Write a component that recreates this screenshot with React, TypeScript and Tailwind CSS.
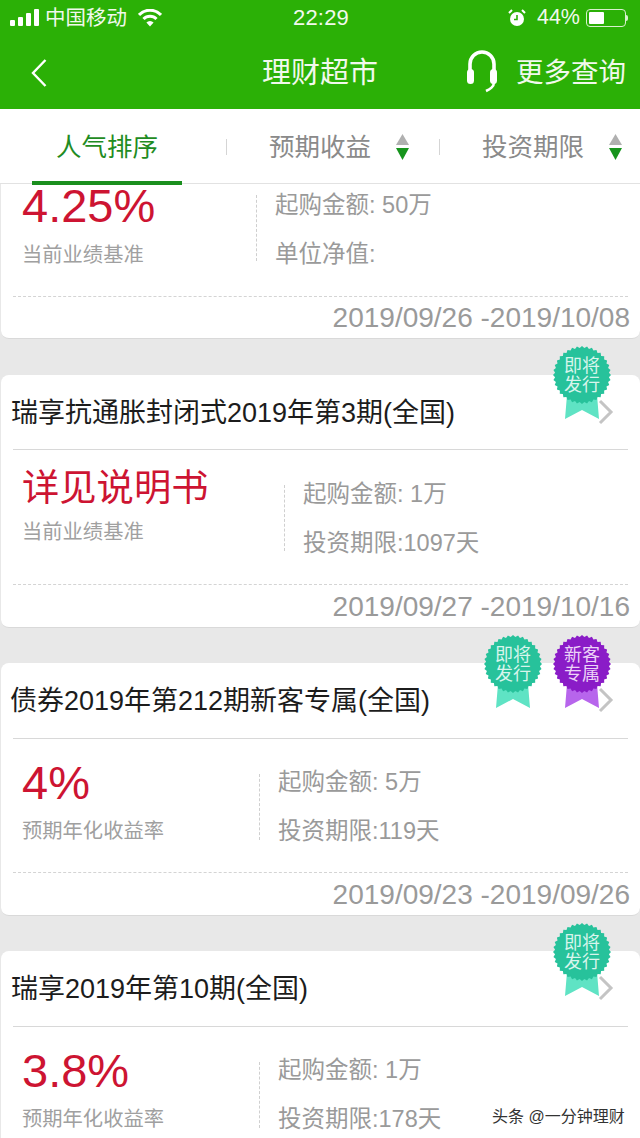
const FONT = "font-['Liberation_Sans','Noto_Sans_CJK_SC',sans-serif]";

function Badge({ fill, ribbon, text, a, b, className }: { fill: string; ribbon: string; text: string; a: string; b: string; className: string }) {
  const pts: string[] = [];
  const n = 36;
  for (let i = 0; i < n * 2; i++) {
    const r = i % 2 === 0 ? 29 : 27;
    const t = (Math.PI * i) / n;
    pts.push(`${(30 + r * Math.cos(t)).toFixed(2)},${(30 + r * Math.sin(t)).toFixed(2)}`);
  }
  return (
    <div className={`absolute w-[60px] h-[76px] ${className}`}>
      <svg width="60" height="76" viewBox="0 0 60 76" className="absolute left-0 top-0">
        <polygon points="15,50 45,50 47,74 30,65 13,74" fill={ribbon} />
        <polygon points={pts.join(" ")} fill={fill} />
      </svg>
      <div className={`absolute left-0 top-[12px] w-[60px] flex flex-col items-center text-[18px] leading-[19px] ${text}`}>
        <span>{a}</span>
        <span>{b}</span>
      </div>
    </div>
  );
}

function Chevron() {
  return (
    <svg width="16" height="26" viewBox="0 0 16 26" className="absolute right-[26px] top-[24px]">
      <path d="M2 2 L13 13 L2 24" fill="none" stroke="#c4c4c4" strokeWidth="3" />
    </svg>
  );
}

type CardProps = {
  title?: string;
  titleClass: string;
  value: string;
  valueClass: string;
  label: string;
  labelClass: string;
  leftWidth: string;
  lines: string[];
  dates: string;
  badges?: React.ReactNode;
  rootClass: string;
  bodyClass: string;
  infoClass: string;
  footerClass: string;
};

function Card({ title, titleClass, value, valueClass, label, labelClass, leftWidth, lines, dates, badges, rootClass, bodyClass, infoClass, footerClass }: CardProps) {
  return (
    <div className={`relative shrink-0 ml-px bg-white rounded-lg border-b border-[#d9d9d9] ${rootClass}`}>
      <div className={`pt-[2px] flex items-center text-[27px] text-[#1c1c1c] whitespace-nowrap ${titleClass}`}>{title}</div>
      <div className="h-px mx-3 bg-[#d8d8d8]" />
      <div className={`flex pl-[21px] ${bodyClass}`}>
        <div className={`flex flex-col shrink-0 ${leftWidth}`}>
          <div className={`h-[46px] leading-[46px] text-[#cd1432] whitespace-nowrap ${valueClass}`}>{value}</div>
          <div className={`h-6 leading-6 text-[20.3px] text-[#a0a0a0] whitespace-nowrap ${labelClass}`}>{label}</div>
        </div>
        <div className="w-px h-[66px] mt-[35px] border-l border-dashed border-[#cfcfcf]" />
        <div className={`ml-[18px] flex flex-col gap-[21px] text-[23.5px] leading-7 text-[#9a9a9a] whitespace-nowrap ${infoClass}`}>
          {lines.map((l) => (
            <div key={l}>{l}</div>
          ))}
        </div>
      </div>
      <div className="mx-3 border-t border-dashed border-[#d4d4d4]" />
      <div className={`pr-[10px] flex items-center justify-end text-[28px] text-[#9a9a9a] whitespace-nowrap ${footerClass}`}>{dates}</div>
      {badges}
      {title ? <Chevron /> : null}
    </div>
  );
}

function Sort() {
  return (
    <svg width="15" height="28" viewBox="0 0 15 28" className="shrink-0">
      <path d="M7.5 1 L14 12 L1 12 Z" fill="#b0b0b0" />
      <path d="M1 15 L14 15 L7.5 27 Z" fill="#16941c" />
    </svg>
  );
}

export default function App() {
  return (
    <div className={`relative w-[640px] h-[1138px] overflow-hidden flex flex-col bg-[#e8e8e8] ${FONT}`}>
      <header className="shrink-0 h-[109px] bg-[#2bb006] text-[#f1f9ec]">
        <div className="h-[36px] flex items-center pl-[10px] pr-[12px]">
          <svg width="30" height="18" viewBox="0 0 30 18" className="shrink-0">
            <rect x="0" y="11" width="5" height="6" rx="1" fill="#fff" />
            <rect x="8" y="8" width="5" height="9" rx="1" fill="#fff" />
            <rect x="16" y="4" width="5" height="13" rx="1" fill="#fff" />
            <rect x="24" y="0" width="5" height="17" rx="1" fill="#fff" />
          </svg>
          <span className="ml-[5px] text-[20.5px] leading-none whitespace-nowrap">中国移动</span>
          <svg width="24" height="18" viewBox="0 0 24 18" className="ml-[11px] shrink-0">
            <path d="M1 6 A15 15 0 0 1 23 6" fill="none" stroke="#fff" strokeWidth="3" />
            <path d="M5.5 10 A9 9 0 0 1 18.5 10" fill="none" stroke="#fff" strokeWidth="3" />
            <path d="M12 17.5 L8.4 13.5 A5 5 0 0 1 15.6 13.5 Z" fill="#fff" />
          </svg>
          <span className="ml-[131px] text-[22px] leading-none whitespace-nowrap tracking-[0.2px]">22:29</span>
          <span className="flex-1" />
          <svg width="18" height="18" viewBox="0 0 18 18" className="shrink-0">
            <circle cx="9" cy="10" r="7" fill="#fff" />
            <path d="M9 6 V10.5 H6" fill="none" stroke="#2bb006" strokeWidth="1.6" />
            <path d="M1 4 L4 1 M17 4 L14 1" stroke="#fff" strokeWidth="2" />
          </svg>
          <span className="ml-[11px] text-[21.5px] leading-none">44%</span>
          <div className="ml-[6px] w-[40px] h-[18px] border border-[#d9f0cf] rounded-[4px] p-[2px]">
            <div className="w-[15px] h-full bg-white rounded-[1px]" />
          </div>
          <div className="w-[2px] h-[6px] bg-[#d9f0cf] rounded-r-sm" />
        </div>
        <div className="h-[73px] flex items-center">
          <div className="w-[262px] pl-[30px] shrink-0">
            <svg width="18" height="30" viewBox="0 0 18 30">
              <path d="M15.5 2 L3 15 L15.5 28" fill="none" stroke="#fff" strokeWidth="2.4" />
            </svg>
          </div>
          <div className="w-[204px] shrink-0 text-[29px] leading-none whitespace-nowrap pt-[2px]">理财超市</div>
          <svg width="32" height="44" viewBox="0 0 32 44" className="shrink-0 -mt-1">
            <path d="M4 24 V15 A12 12 0 0 1 28 15 V24" fill="none" stroke="#fff" strokeWidth="3.6" />
            <rect x="1" y="20" width="7" height="15" rx="3.5" fill="#fff" />
            <rect x="24" y="20" width="7" height="15" rx="3.5" fill="#fff" />
            <path d="M28 33 C28 38 24 40 20 42" fill="none" stroke="#fff" strokeWidth="2.6" />
          </svg>
          <div className="ml-[18px] text-[27.5px] leading-none whitespace-nowrap">更多查询</div>
        </div>
      </header>

      <nav className="relative z-10 shrink-0 h-[75px] pt-[2px] bg-white flex items-center border-b border-[#e2e2e2]">
        <div className="w-[226px] pl-[56px] text-[25.5px] text-[#1f8c23] whitespace-nowrap">人气排序</div>
        <div className="w-px h-[16px] bg-[#d5d5d5]" />
        <div className="w-[212px] pl-[42px] flex items-center gap-[24px] text-[25.5px] text-[#8a8a8a] whitespace-nowrap">
          <span>预期收益</span>
          <Sort />
        </div>
        <div className="w-px h-[16px] bg-[#d5d5d5]" />
        <div className="pl-[42px] flex items-center gap-[24px] text-[25.5px] text-[#8a8a8a] whitespace-nowrap">
          <span>投资期限</span>
          <Sort />
        </div>
        <div className="absolute left-[32px] bottom-[-2px] w-[150px] h-[4px] bg-[#1a8f1e]" />
      </nav>

      <main className="flex-1 overflow-hidden flex flex-col gap-[35px]">
        <Card
          rootClass="-mt-[99px] mb-[1px]"
          titleClass="h-[74px]"
          bodyClass="h-[136px]"
          infoClass="pt-[31px]"
          footerClass="h-[41px]"
          value="4.25%"
          valueClass="text-[47px] mt-[23px]"
          label="当前业绩基准"
          labelClass="mt-[14px]"
          leftWidth="w-[234px]"
          lines={["起购金额: 50万", "单位净值:"]}
          dates="2019/09/26 -2019/10/08"
        />
        <Card
          rootClass=""
          bodyClass="h-[134px]"
          infoClass="pt-[30px]"
          footerClass="h-[42px] pt-[2px]"
          title="瑞享抗通胀封闭式2019年第3期(全国)"
          titleClass="h-[74px] pl-[10px]"
          value="详见说明书"
          valueClass="text-[37.3px] mt-[15px]"
          label="当前业绩基准"
          labelClass="mt-[9px]"
          leftWidth="w-[262px]"
          lines={["起购金额: 1万", "投资期限:1097天"]}
          dates="2019/09/27 -2019/10/16"
          badges={<Badge fill="#27c29b" ribbon="#5fe3c4" text="text-[#d8f5ec]" a="即将" b="发行" className="right-[28px] -top-[30px]" />}
        />
        <Card
          rootClass=""
          bodyClass="h-[133px]"
          infoClass="pt-[29px]"
          footerClass="h-[42px] pt-[2px]"
          title="债券2019年第212期新客专属(全国)"
          titleClass="h-[75px] pl-[9px]"
          value="4%"
          valueClass="text-[47px] mt-[21px]"
          label="预期年化收益率"
          labelClass="mt-[13px]"
          leftWidth="w-[237px]"
          lines={["起购金额: 5万", "投资期限:119天"]}
          dates="2019/09/23 -2019/09/26"
          badges={
            <>
              <Badge fill="#27c29b" ribbon="#5fe3c4" text="text-[#d8f5ec]" a="即将" b="发行" className="right-[97px] -top-[29px]" />
              <Badge fill="#8a1cc7" ribbon="#b765ec" text="text-[#ecd3f7]" a="新客" b="专属" className="right-[28px] -top-[29px]" />
            </>
          }
        />
        <Card
          rootClass=""
          bodyClass="h-[133px]"
          infoClass="pt-[29px]"
          footerClass="h-[42px] pt-[2px]"
          title="瑞享2019年第10期(全国)"
          titleClass="h-[75px] pl-[10px]"
          value="3.8%"
          valueClass="text-[47px] mt-[21px]"
          label="预期年化收益率"
          labelClass="mt-[13px]"
          leftWidth="w-[237px]"
          lines={["起购金额: 1万", "投资期限:178天"]}
          dates=""
          badges={<Badge fill="#27c29b" ribbon="#5fe3c4" text="text-[#d8f5ec]" a="即将" b="发行" className="right-[28px] -top-[29px]" />}
        />
      </main>

      <div className="absolute left-[492px] top-[1106px] text-[16px] leading-[22px] text-[#333] whitespace-nowrap [text-shadow:0_0_2px_#fff]">
        头条 @一分钟理财
      </div>
    </div>
  );
}
